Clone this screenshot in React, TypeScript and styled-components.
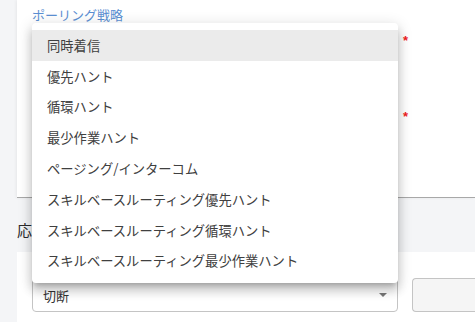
import React from 'react';
import styled, { createGlobalStyle } from 'styled-components';

const GlobalStyle = createGlobalStyle`
  html, body {
    margin: 0;
    padding: 0;
    background: #f4f5f7;
    font-family: "Noto Sans CJK JP", "Noto Sans", sans-serif;
    overflow: hidden;
  }
`;

const options = [
  '同時着信',
  '優先ハント',
  '循環ハント',
  '最少作業ハント',
  'ページング/インターコム',
  'スキルベースルーティング優先ハント',
  'スキルベースルーティング循環ハント',
  'スキルベースルーティング最少作業ハント',
];

const App = () => {
  return (
    <React.Fragment>
      <GlobalStyle />
      <Page>
        <Card>
          <Label>ポーリング戦略</Label>
          <FieldRow top={26}>
            <Required>*</Required>
          </FieldRow>
          <FieldRow top={102}>
            <Required>*</Required>
          </FieldRow>
          <Menu>
            {options.map((o, i) => (
              <MenuItem key={o} active={i === 0}>{o}</MenuItem>
            ))}
          </Menu>
        </Card>
        <SectionTitle>応答</SectionTitle>
        <LowerCard>
          <SelectBox>
            <span>切断</span>
            <Caret />
          </SelectBox>
          <DisabledBox />
        </LowerCard>
      </Page>
    </React.Fragment>
  );
};

const Page = styled.div`
  width: 475px;
  height: 322px;
  padding-left: 17px;
  box-sizing: border-box;
  overflow: hidden;
`;

const Card = styled.div`
  position: relative;
  height: 198px;
  background: #fff;
  box-sizing: border-box;
  border-bottom: 1px solid #a8a8a8;
  box-shadow: -1px 0 3px rgba(0, 0, 0, 0.06);
  padding: 6px 15px 0;
`;

const Label = styled.div`
  font-size: 13px;
  line-height: 17px;
  color: #5b8fd2;
`;

const FieldRow = styled.div<{ top: number }>`
  position: absolute;
  top: ${(p) => p.top}px;
  left: 386px;
`;

const Required = styled.span`
  color: #f01c1c;
  font-size: 13px;
  font-family: "Liberation Sans", sans-serif;
  font-weight: bold;
`;

const Menu = styled.div`
  position: absolute;
  top: 23px;
  left: 15px;
  width: 366px;
  padding: 7px 0;
  background: #fff;
  border-radius: 4px;
  box-shadow: 0 5px 5px -3px rgba(0, 0, 0, 0.2), 0 8px 10px 1px rgba(0, 0, 0, 0.14),
    0 3px 14px 2px rgba(0, 0, 0, 0.12);
  z-index: 10;
`;

const MenuItem = styled.div<{ active?: boolean }>`
  height: 30.8px;
  display: flex;
  align-items: center;
  padding-left: 15px;
  font-size: 13.3px;
  color: #404040;
  background: ${(p) => (p.active ? '#ebebeb' : 'transparent')};
`;

const SectionTitle = styled.div`
  margin-top: 22px;
  height: 32px;
  font-size: 15px;
  line-height: 20px;
  color: #2a2a2a;
`;

const LowerCard = styled.div`
  background: #fff;
  height: 70px;
  box-sizing: border-box;
  padding: 26px 0 0 15px;
  display: flex;
  align-items: flex-start;
  gap: 14px;
`;

const SelectBox = styled.div`
  width: 366px;
  height: 34px;
  box-sizing: border-box;
  border: 1px solid #c4c4c4;
  border-radius: 4px;
  display: flex;
  align-items: center;
  justify-content: space-between;
  padding: 0 10px 0 10px;
  font-size: 13px;
  color: #333;
`;

const Caret = styled.span`
  width: 0;
  height: 0;
  border-left: 4px solid transparent;
  border-right: 4px solid transparent;
  border-top: 4px solid #777;
`;

const DisabledBox = styled.div`
  flex: 1;
  height: 34px;
  box-sizing: border-box;
  border: 1px solid #c4c4c4;
  border-right: none;
  border-radius: 4px 0 0 4px;
  background: #f5f5f5;
`;

export default App;
